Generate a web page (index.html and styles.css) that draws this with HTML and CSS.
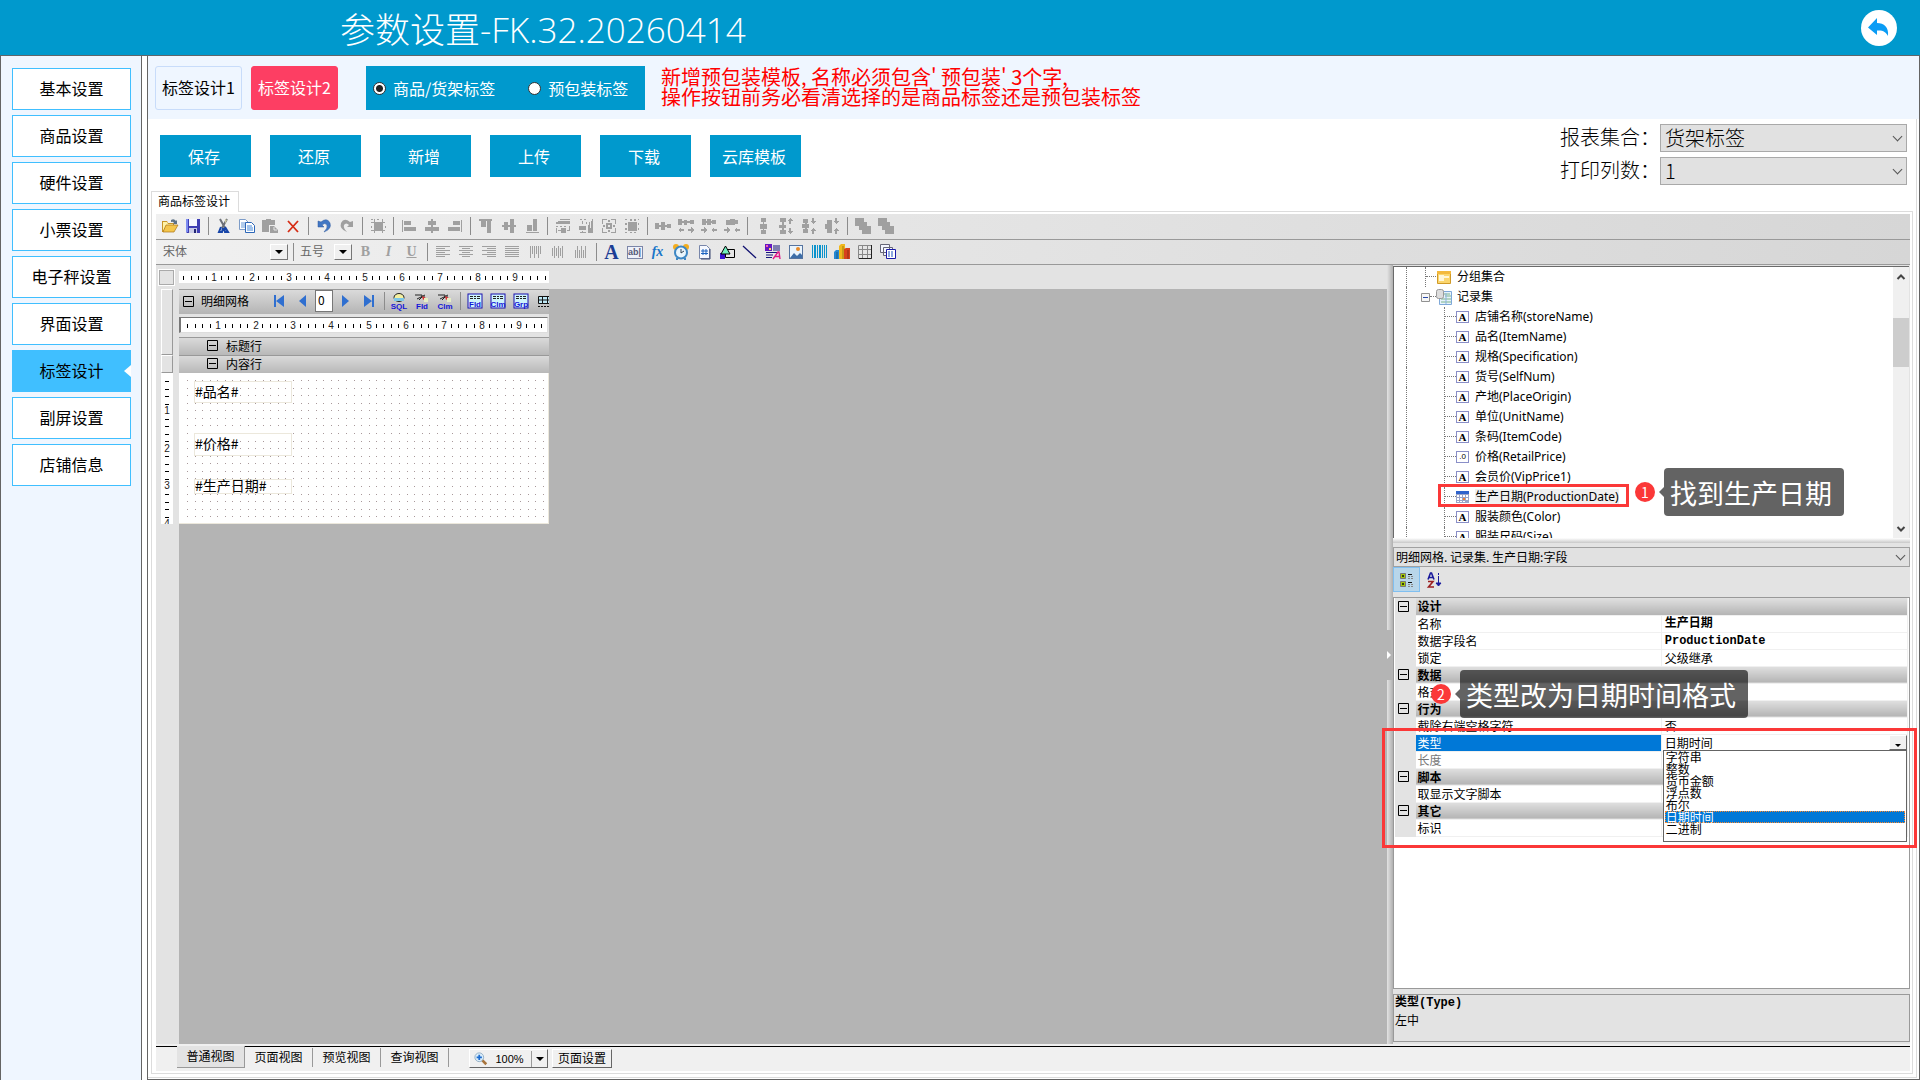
FILE: index.html
```html
<!DOCTYPE html>
<html lang="zh-CN">
<head>
<meta charset="utf-8">
<title>参数设置</title>
<link rel="stylesheet" href="styles.css">
</head>
<body>
<svg class="defs" aria-hidden="true">
  <symbol id="minus" viewBox="0 0 11 11"><path d="M.5.5h10v10h-10zM2 5.500h7" fill="none" stroke="#000"/></symbol>
  <symbol id="pencil" viewBox="0 0 16 16"><path d="M1 2h7v2h3M3 6l8-4M5 7l3-3" stroke="#222" fill="none"/><path d="M8 3l4 2-3 2z" fill="#d33"/><path d="M10 5h4v4h-4z" fill="#e6efc4"/></symbol>
  <symbol id="gridbox" viewBox="0 0 16 16"><rect x="1" y="1" width="14" height="14" fill="#cff3fb" stroke="#1a10b0"/><path d="M3 3h3v1H3zM7 3h2v1H7zM10 3h3v1h-3zM3 5h3v1H3zM7 5h2v1H7zM10 5h3v1h-3z" fill="#222"/></symbol>
</svg>

<header class="header">
  <h1>参数设置-FK.32.20260414</h1>
  <button class="back" aria-label="返回"><svg viewBox="0 0 36 36"><circle cx="18" cy="18" r="18" fill="#fff"/><path d="M7 17.500L16 8v5c7 0 12 4 11 13-2-4-5-6-11-5.500V25z" fill="#0a9cf5"/></svg></button>
</header>

<div class="body">
  <nav class="sidebar">
    <button>基本设置</button>
    <button>商品设置</button>
    <button>硬件设置</button>
    <button>小票设置</button>
    <button>电子秤设置</button>
    <button>界面设置</button>
    <button class="current">标签设计</button>
    <button>副屏设置</button>
    <button>店铺信息</button>
  </nav>

  <main class="main">
    <section class="topbar">
      <button class="mode">标签设计1</button>
      <button class="mode on">标签设计2</button>
      <div class="kinds">
        <label><input type="radio" name="kind" checked>商品/货架标签</label>
        <label><input type="radio" name="kind">预包装标签</label>
      </div>
      <p class="warning">新增预包装模板, 名称必须包含' 预包装' 3个字,<br>操作按钮前务必看清选择的是商品标签还是预包装标签</p>
    </section>

    <div class="outer">
      <section class="actions">
        <div class="buttons">
          <button>保存</button><button>还原</button><button>新增</button><button>上传</button><button>下载</button><button>云库模板</button>
        </div>
        <div class="options">
          <label for="report">报表集合：</label>
          <div class="pick"><select id="report"><option>货架标签</option></select></div>
          <label for="cols">打印列数：</label>
          <div class="pick"><select id="cols"><option>1</option></select></div>
        </div>
      </section>

      <button class="pagetab">商品标签设计</button>
      <section class="page">
        <div class="toolbar">
          <button aria-label="打开"><svg viewBox="0 0 16 16"><path d="M0 3h5l1 2h6v9H0z" fill="#c89528"/><path d="M1 4h4l1 2h5v2H4l-3 5z" fill="#fff3a8"/><path d="M4 7h12l-4 7H1z" fill="#f4c64c" stroke="#a9741a" stroke-width=".7"/><path d="M9 2q3-2 5 1l1-1v4h-4l1-1q-1-2-3-1z" fill="#5d7288"/></svg></button>
          <button aria-label="存盘"><svg viewBox="0 0 16 16"><path d="M1 1h14v14H2l-1-1z" fill="#3e3eb4"/><path d="M4 1h8v7H4z" fill="#f5f7ff"/><path d="M1 1h2v13H1z" fill="#7c8cf0"/><path d="M4 10h8v5H4z" fill="#c9cbe6"/><path d="M9 11h2v4H9z" fill="#222574"/></svg></button>
          <i class="sep"></i>
          <button aria-label="剪切"><svg viewBox="0 0 16 16"><path d="M4 1l5 9M11 1L6 10" stroke="#6c7078" stroke-width="2"/><path d="M9 1l2 1-2 4z" fill="#c8c6a0"/><path d="M5 9l-2 5h3l1-4M9 9l3 5H9l-1-4" fill="none" stroke="#1745a8" stroke-width="2"/></svg></button>
          <button aria-label="复制"><svg viewBox="0 0 16 16"><path d="M.5 1.500h6l3 3v7h-9z" fill="#fff" stroke="#7d9cc8"/><path d="M2 5h5M2 7h4M2 9h4" stroke="#6699d8"/><path d="M6.500 4.500h6l3 3v7h-9z" fill="#fff" stroke="#2d67b8"/><path d="M8 8h5M8 10h6M8 12h6" stroke="#4488d8"/></svg></button>
          <button aria-label="粘贴"><svg viewBox="0 0 16 16" fill="#a0a0a0"><path d="M0 2h4V1h5v1h4v5H7v7H0z"/><path d="M8 8h4l4 4v3H8z"/><path d="M12 9v3h3" stroke="#e8e8e8" fill="none"/></svg></button>
          <button aria-label="删除"><svg viewBox="0 0 16 16"><path d="M3 3l10 11M13 3L3 14" stroke="#d62c14" stroke-width="1.800"/></svg></button>
          <i class="sep"></i>
          <button aria-label="撤消"><svg viewBox="0 0 16 16"><path d="M2 3v6h6L6 7q3-3 5 0 1 3-3 7 8-3 6-9-3-6-9-1z" fill="#4177c4" stroke="#2a569c" stroke-width=".5"/></svg></button>
          <button aria-label="重做"><svg viewBox="0 0 16 16"><path d="M14 3v6H8l2-2q-3-3-5 0-1 3 3 7-8-3-6-9 3-6 9-1z" fill="#a0a0a0"/></svg></button>
          <i class="sep"></i>
          <button aria-label="对齐网格"><svg class="g" viewBox="0 0 16 16"><path d="M5 5h7v7H5zM4 1h1v14H4zM12 1h1v14h-1zM1 4h14v1H1zM1 12h14v1H1zM1 1h2v1H1zM7 1h2v1H7zM1 8h1v2H1zM15 8h1v2h-1z"/></svg></button>
          <i class="sep"></i>
          <button aria-label="左对齐"><svg class="g" viewBox="0 0 16 16"><path d="M1 2h1v12H1zM3 3h7v4H3zM3 9h12v4H3z"/></svg></button>
          <button aria-label="水平居中"><svg class="g" viewBox="0 0 16 16"><path d="M7 1h2v14H7zM4 3h8v4H4zM1 9h14v4H1z"/></svg></button>
          <button aria-label="右对齐"><svg class="g" viewBox="0 0 16 16"><path d="M14 2h1v12h-1zM6 3h7v4H6zM1 9h12v4H1z"/></svg></button>
          <i class="sep"></i>
          <button aria-label="顶对齐"><svg class="g" viewBox="0 0 16 16"><path d="M1 1h13v2H1zM3 3h5v6H3zM9 3h4v12H9z"/></svg></button>
          <button aria-label="垂直居中"><svg class="g" viewBox="0 0 16 16"><path d="M1 7h14v2H1zM3 4h4v8H3zM9 1h4v14H9z"/></svg></button>
          <button aria-label="底对齐"><svg class="g" viewBox="0 0 16 16"><path d="M2 14h13v1H2zM3 7h5v6H3zM9 1h4v12H9z"/></svg></button>
          <i class="sep"></i>
          <button aria-label="等宽"><svg class="g" viewBox="0 0 16 16"><path d="M5 1h10v1H5zM3 3h12v3H1V4h2zM1 8h2v1H1zM5 8h2v1H5zM9 8h2v1H9zM14 8h1v4h-1zM1 10h1v5H1zM3 12h3v1H3zM6 10h5v5H6zM12 12h3v1h-3z"/></svg></button>
          <button aria-label="等高"><svg class="g" viewBox="0 0 16 16"><path d="M14 1h1v14h-5V7h1V4h1v6h1V3h1zM2 1h2v1H2zM6 1h2v1H6zM4 3h1v3H4zM1 8h7v4H1zM4 13h1v2H4zM2 14h6v1H2zM8 4h1v2H8z"/></svg></button>
          <button aria-label="等大小"><svg class="g" viewBox="0 0 16 16"><path d="M1 1h5v1H2v4H1zM10 1h5v5h-1V2h-4zM1 10h1v4h4v1H1zM14 10h1v5h-5v-1h4zM5 5h6v6H5zM7 2h2v2H7zM7 12h2v2H7zM2 7h2v2H2zM12 7h2v2h-2z"/><path d="M7 7h2v2H7z" fill="#e8e8e8"/></svg></button>
          <button aria-label="适应网格"><svg class="g" viewBox="0 0 16 16"><path d="M4 4h9v9H4zM1 1h2v1H1zM6 1h2v2H6zM10 1h2v2h-2zM14 1h1v1h-1zM1 5h2v2H1zM1 10h2v2H1zM14 5h1v2h-1zM14 10h1v2h-1zM1 14h2v1H1zM6 14h2v1H6zM10 14h2v1h-2z"/></svg></button>
          <i class="sep"></i>
          <button aria-label="水平等距"><svg class="g" viewBox="0 0 16 16"><path d="M0 5h4v6H0zM4 7h2v2H4zM6 4h4v8H6zM10 7h2v2h-2zM12 6h4v4h-4z"/></svg></button>
          <button aria-label="增加水平间距"><svg class="g" viewBox="0 0 16 16"><path d="M0 1h4v6H0zM4 3h2v2H4zM6 2h3v5H6zM9 3h3v2H9zM12 2h4v4h-4zM0 12l3-3v2h3v2H3v2zM16 12l-3-3v2h-3v2h3v2z"/></svg></button>
          <button aria-label="减少水平间距"><svg class="g" viewBox="0 0 16 16"><path d="M1 1h4v6H1zM5 3h2v2H5zM6 1h4v6H6zM10 3h2v2h-2zM11 2h4v4h-4zM6 12L3 9v2H0v2h3v2zM10 12l3-3v2h3v2h-3v2z"/></svg></button>
          <button aria-label="移除水平间距"><svg class="g" viewBox="0 0 16 16"><path d="M2 2h5v5H2zM6 1h5v6H6zM11 2h3v4h-3zM6 12L3 9v2H0v2h3v2zM10 12l3-3v2h3v2h-3v2z"/></svg></button>
          <i class="sep"></i>
          <button aria-label="垂直等距"><svg class="g" viewBox="0 0 16 16"><path d="M6 0h5v4H6zM8 4h1v2H8zM5 6h7v5H5zM8 11h1v1H8zM6 12h5v4H6z"/></svg></button>
          <button aria-label="增加垂直间距"><svg class="g" viewBox="0 0 16 16"><path d="M2 0h6v4H2zM4 4h2v3H4zM1 7h7v3H1zM4 10h2v3H4zM2 12h6v4H2zM12 0l3 3h-2v3h-2V3H9zM12 16l3-3h-2v-3h-2v3H9z"/></svg></button>
          <button aria-label="减少垂直间距"><svg class="g" viewBox="0 0 16 16"><path d="M2 1h5v4H2zM1 6h7v4H1zM2 11h5v4H2zM4 4h2v8H4zM12 6l3-3h-2V0h-2v3H9zM12 10l3 3h-2v3h-2v-3H9z"/></svg></button>
          <button aria-label="移除垂直间距"><svg class="g" viewBox="0 0 16 16"><path d="M3 2h5v4H3zM1 6h7v5H1zM3 11h5v4H3zM12 6l3-3h-2V0h-2v3H9zM12 10l3 3h-2v3h-2v-3H9z"/></svg></button>
          <i class="sep"></i>
          <button aria-label="置前"><svg class="g" viewBox="0 0 16 16"><path d="M0 0h9v4h3v4h4v8H7v-4H4V8H0z"/></svg></button>
          <button aria-label="置后"><svg class="g" viewBox="0 0 16 16"><path d="M0 0h9v4h3v4h4v8H7v-4H4V8H0z"/></svg></button>
        </div>

        <div class="toolbar second">
          <div class="combo font"><select aria-label="字体"><option>宋体</option></select><i></i></div>
          <i class="sep"></i>
          <div class="combo size"><select aria-label="字号"><option>五号</option></select><i></i></div>
          <button class="letter b" aria-label="粗体">B</button>
          <button class="letter it" aria-label="斜体">I</button>
          <button class="letter u" aria-label="下划线">U</button>
          <i class="sep"></i>
          <button aria-label="文字左对齐"><svg class="g" viewBox="0 0 16 16"><path d="M1 2h14v1H1zM1 4h9v1H1zM1 6h14v1H1zM1 8h9v1H1zM1 10h14v1H1zM1 12h9v1H1z"/></svg></button>
          <button aria-label="文字居中"><svg class="g" viewBox="0 0 16 16"><path d="M1 2h14v1H1zM4 4h8v1H4zM1 6h14v1H1zM4 8h8v1H4zM1 10h14v1H1zM4 12h8v1H4z"/></svg></button>
          <button aria-label="文字右对齐"><svg class="g" viewBox="0 0 16 16"><path d="M1 2h14v1H1zM6 4h9v1H6zM1 6h14v1H1zM6 8h9v1H6zM1 10h14v1H1zM6 12h9v1H6z"/></svg></button>
          <button aria-label="两端对齐"><svg class="g" viewBox="0 0 16 16"><path d="M1 2h14v1H1zM1 4h14v1H1zM1 6h14v1H1zM1 8h14v1H1zM1 10h14v1H1zM1 12h14v1H1z"/></svg></button>
          <button aria-label="文字靠顶"><svg class="g" viewBox="0 0 16 16"><path d="M3 2h1v12H3zM5 2h1v8H5zM7 2h1v12H7zM9 2h1v8H9zM11 2h1v12h-1zM13 2h1v8h-1z"/></svg></button>
          <button aria-label="文字垂直居中"><svg class="g" viewBox="0 0 16 16"><path d="M2 4h1v8H2zM4 2h1v12H4zM6 4h1v8H6zM8 2h1v12H8zM10 4h1v8h-1zM12 2h1v12h-1z"/></svg></button>
          <button aria-label="文字靠底"><svg class="g" viewBox="0 0 16 16"><path d="M2 6h1v8H2zM4 2h1v12H4zM6 6h1v8H6zM8 2h1v12H8zM10 6h1v8h-1zM12 2h1v12h-1z"/></svg></button>
          <i class="sep"></i>
          <button class="letter text" aria-label="静态框">A</button>
          <button aria-label="综合文字框"><span class="abl">ab|</span></button>
          <button class="letter fx" aria-label="公式">fx</button>
          <button aria-label="系统变量框"><svg viewBox="0 0 16 16"><circle cx="3" cy="3" r="3" fill="#f3ad1e"/><circle cx="13" cy="3" r="3" fill="#f3ad1e"/><circle cx="8" cy="8.500" r="6" fill="#e9f5fc" stroke="#3d87c4" stroke-width="2"/><path d="M8 5v4l3-2" stroke="#345" fill="none"/><path d="M3 14h2v2H3zM11 14h2v2h-2z" fill="#3d87c4"/></svg></button>
          <button aria-label="页码"><svg viewBox="0 0 16 16"><path d="M3.500 1.500h7l3 3v10h-10z" fill="#f5f8ff" stroke="#7886aa"/><path d="M14 5v10H5" stroke="#3b4670" fill="none"/><path d="M7 5v6M10 5v6M5 7h7M5 9.500h7" stroke="#1c63c0"/></svg></button>
          <button aria-label="图形框"><svg viewBox="0 0 16 16"><path d="M6.500 5.500h9v8h-9z" fill="none" stroke="#000"/><path d="M1 9h5v6H1z" fill="#3a14d2"/><path d="M6.500 2L2 10h9z" fill="#72f2c0" stroke="#000"/></svg></button>
          <button aria-label="线段"><svg viewBox="0 0 16 16"><path d="M1 2l13 12" stroke="#101070" stroke-width="1.300"/></svg></button>
          <button aria-label="富文本框"><svg viewBox="0 0 16 16"><path d="M0 0h7v7H0z" fill="#6418c0"/><path d="M1 1h2v2H1z" fill="#ff5cb0"/><path d="M4 4h2v2H4z" fill="#ffe14d"/><path d="M8 2h7M8 4h7M8 6h7M1 8.500h13M1 11h7M1 13.500h6" stroke="#15157a"/><path d="M8 15l5-7h1l1 7M10 12.500h4" fill="none" stroke="#e01888" stroke-width="1.400"/></svg></button>
          <button aria-label="图像框"><svg viewBox="0 0 16 16"><rect x="1.500" y="1.500" width="13" height="13" fill="#eaf4fc" stroke="#5574a0"/><path d="M2 14l4-5 3 3 3-3 2 2v3z" fill="#3d6ea8"/><circle cx="10" cy="5" r="2" fill="#e88a28"/></svg></button>
          <button aria-label="条形码"><svg viewBox="0 0 16 16" fill="#0a93cc"><path d="M1 1h1v13H1zM3 1h2v13H3zM6 1h1v13H6zM8 1h2v13H8zM11 1h1v13h-1zM13 1h1v13h-1zM15 1h1v13h-1z"/></svg></button>
          <button aria-label="图表"><svg viewBox="0 0 16 16"><path d="M0 8l2-2h3v9H0z" fill="#2488d2"/><path d="M5 2l2-2h4v15H5z" fill="#f0b81c"/><path d="M10 5l2-1h4v11h-6z" fill="#d8421c"/><path d="M9 2v13M14 6v9M3 8v7" stroke="#00000055"/></svg></button>
          <button aria-label="自由表格"><svg viewBox="0 0 16 16"><path d="M1.500 1.500h13v13h-13zM5.500 2v12M10.500 2v12M2 5.500h12M2 10.500h12" fill="none" stroke="#888"/><path d="M14.500 1v13.500H2" stroke="#222" fill="none"/></svg></button>
          <button aria-label="子报表"><svg viewBox="0 0 16 16"><path d="M.5.5h9v8h-9zM3.500 3.500h9v8h-9z" fill="#f4f6ff" stroke="#667"/><path d="M6.500 5.500h9v9h-9z" fill="#fff" stroke="#1a1aa8"/><path d="M8 8h6M8 10h6M8 12h6" stroke="#1a50c0" stroke-dasharray="2 1"/></svg></button>
        </div>

        <div class="work">
          <div class="design">
            <div class="rulerrow">
              <span class="corner"></span>
              <svg class="ruler" viewBox="0 0 370 12"><path d="M4 6.500H370"/><g text-anchor="middle"><text x="35" y="10">1</text><text x="73" y="10">2</text><text x="110" y="10">3</text><text x="148" y="10">4</text><text x="186" y="10">5</text><text x="223" y="10">6</text><text x="261" y="10">7</text><text x="299" y="10">8</text><text x="336" y="10">9</text></g></svg>
            </div>
            <div class="stage">
              <div class="gutter">
                <span class="bevel tall"></span><span class="bevel"></span>
                <svg class="ruler" viewBox="0 0 12 151"><path d="M6 8V151"/><g text-anchor="middle"><text x="6" y="41">1</text><text x="6" y="79">2</text><text x="6" y="116">3</text><text x="6" y="154">4</text></g></svg>
              </div>
              <div class="report">
                <div class="gridhead">
                  <svg class="box"><use href="#minus"/></svg><span>明细网格</span>
                  <button aria-label="首条"><svg viewBox="0 0 16 16"><path d="M3 2h2v12H3zM13 2v12L5 8z" fill="#2f6fd0"/></svg></button>
                  <button aria-label="上一条"><svg viewBox="0 0 16 16"><path d="M12 2v12L5 8z" fill="#2f6fd0"/></svg></button>
                  <input aria-label="记录号" value="0">
                  <button aria-label="下一条"><svg viewBox="0 0 16 16"><path d="M4 2v12l7-6z" fill="#2f6fd0"/></svg></button>
                  <button aria-label="末条"><svg viewBox="0 0 16 16"><path d="M11 2h2v12h-2zM3 2v12l8-6z" fill="#2f6fd0"/></svg></button>
                  <i class="sep"></i>
                  <button aria-label="查询SQL"><svg viewBox="0 0 16 16"><ellipse cx="8" cy="4.500" rx="5" ry="4" fill="#f4f0a0" stroke="#222"/><path d="M3 5h10v3H3z" fill="#7cc7e8"/><text x="8" y="16" text-anchor="middle" class="tag">SQL</text></svg></button>
                  <button aria-label="字段"><svg viewBox="0 0 16 16"><use href="#pencil"/><text x="8" y="16" text-anchor="middle" class="tag">Fld</text></svg></button>
                  <button aria-label="列"><svg viewBox="0 0 16 16"><use href="#pencil"/><text x="8" y="16" text-anchor="middle" class="tag">Clm</text></svg></button>
                  <i class="sep"></i>
                  <button aria-label="字段表"><svg viewBox="0 0 16 16"><use href="#gridbox"/><text x="8" y="14" text-anchor="middle" class="tag">Fld</text></svg></button>
                  <button aria-label="列表"><svg viewBox="0 0 16 16"><use href="#gridbox"/><text x="8" y="14" text-anchor="middle" class="tag">Clm</text></svg></button>
                  <button aria-label="分组表"><svg viewBox="0 0 16 16"><use href="#gridbox"/><text x="8" y="14" text-anchor="middle" class="tag">Grp</text></svg></button>
                  <button aria-label="表格"><svg viewBox="0 0 16 16"><path d="M2.500 3.500h14v7h-14z" fill="#bfe9f6" stroke="#111"/><path d="M2 7h14M6.500 3v7M11.500 3v7" stroke="#111"/><path d="M2 13.500h14" stroke="#111" stroke-dasharray="2 1"/></svg></button>
                </div>
                <div class="subruler">
                  <svg class="ruler" viewBox="0 0 366 12"><path d="M6 6.500H366"/><g text-anchor="middle"><text x="37" y="10">1</text><text x="75" y="10">2</text><text x="112" y="10">3</text><text x="150" y="10">4</text><text x="188" y="10">5</text><text x="225" y="10">6</text><text x="263" y="10">7</text><text x="301" y="10">8</text><text x="338" y="10">9</text></g></svg>
                </div>
                <div class="rowhead"><svg class="box"><use href="#minus"/></svg>标题行</div>
                <div class="rowhead"><svg class="box"><use href="#minus"/></svg>内容行</div>
                <div class="canvas">
                  <svg class="dots"><defs><pattern id="dots" width="53" height="53" x="8" y="7" patternUnits="userSpaceOnUse"><path d="M0 .5h53M0 8.500h53M0 15.500h53M0 23.500h53M0 30.500h53M0 38.500h53M0 45.500h53" stroke="#a8989a" stroke-dasharray="1 7 1 6 1 7 1 6 1 7 1 6 1 7"/></pattern></defs><rect x="8" y="7" width="360" height="142" fill="url(#dots)"/></svg>
                  <div class="field f1">#品名#</div>
                  <div class="field f2">#价格#</div>
                  <div class="field f3">#生产日期#</div>
                </div>
              </div>
            </div>
          </div>
          <div class="splitter"><span></span></div>

          <aside class="panel">
            <div class="treebox">
              <div class="tree">
                <div class="node"><i class="g1"></i><i class="g2"></i><i class="h10"></i><svg class="i16" viewBox="0 0 16 16"><path d="M1.500 3.500h13v11h-13z" fill="#fbd66e" stroke="#d09a28"/><path d="M1 2h14v3H1z" fill="#f3b93c"/><path d="M3 6h5v1h5v2H8v3H3z" fill="#fff6d8"/></svg><span>分组集合</span></div>
                <div class="node"><i class="g1"></i><svg class="toggle" viewBox="0 0 9 9"><path d="M.5.5h8v8h-8z" fill="#f6f6f6" stroke="#919191"/><path d="M2 4.500h5" stroke="#2a4aa8"/></svg><i class="h6"></i><svg class="i16 rs" viewBox="0 0 16 16"><path d="M3.500 2.500h12v13h-12z" fill="#e6f2fc" stroke="#7ea8d8"/><path d="M8 5h6M5 10h10M5 13h10M9 7h6" stroke="#7fb58a"/><path d="M10 4v11" stroke="#8bb4e0"/><rect x=".5" y=".5" width="7" height="9" rx="2" fill="#ddd" stroke="#999"/></svg><span>记录集</span></div>
                <div class="node leaf"><i class="g1"></i><i class="g3"></i><i class="h11"></i><b class="type">A</b><span>店铺名称(storeName)</span></div>
                <div class="node leaf"><i class="g1"></i><i class="g3"></i><i class="h11"></i><b class="type">A</b><span>品名(ItemName)</span></div>
                <div class="node leaf"><i class="g1"></i><i class="g3"></i><i class="h11"></i><b class="type">A</b><span>规格(Specification)</span></div>
                <div class="node leaf"><i class="g1"></i><i class="g3"></i><i class="h11"></i><b class="type">A</b><span>货号(SelfNum)</span></div>
                <div class="node leaf"><i class="g1"></i><i class="g3"></i><i class="h11"></i><b class="type">A</b><span>产地(PlaceOrigin)</span></div>
                <div class="node leaf"><i class="g1"></i><i class="g3"></i><i class="h11"></i><b class="type">A</b><span>单位(UnitName)</span></div>
                <div class="node leaf"><i class="g1"></i><i class="g3"></i><i class="h11"></i><b class="type">A</b><span>条码(ItemCode)</span></div>
                <div class="node leaf"><i class="g1"></i><i class="g3"></i><i class="h11"></i><b class="type num">.0</b><span>价格(RetailPrice)</span></div>
                <div class="node leaf"><i class="g1"></i><i class="g3"></i><i class="h11"></i><b class="type">A</b><span>会员价(VipPrice1)</span></div>
                <div class="node leaf picked"><i class="g1"></i><i class="g3"></i><i class="h11"></i><svg class="i14" viewBox="0 0 14 14"><path d="M0 1h13v12H0z" fill="#9aa4c8"/><path d="M0 1h13v3H0z" fill="#2f63cc"/><path d="M1 5h2v2H1zM4 5h2v2H4zM7 5h2v2H7zM10 5h2v2h-2zM1 8h2v2H1zM4 8h2v2H4zM10 8h2v2h-2zM1 11h2v1H1zM4 11h2v1H4zM7 11h2v1H7z" fill="#fff"/><path d="M7 8h2v2H7z" fill="#f08030"/></svg><span>生产日期(ProductionDate)</span>
                  <div class="mark"></div><div class="note"><b>1</b><p>找到生产日期</p></div>
                </div>
                <div class="node leaf"><i class="g1"></i><i class="g3"></i><i class="h11"></i><b class="type">A</b><span>服装颜色(Color)</span></div>
                <div class="node leaf"><i class="g1"></i><i class="g3"></i><i class="h11"></i><b class="type">A</b><span>服装尺码(Size)</span></div>
              </div>
              <div class="scroll"><svg viewBox="0 0 16 20"><path d="M4.500 12L8 8.500l3.500 3.500" /></svg><span></span><svg viewBox="0 0 16 20"><path d="M4.500 9L8 12.500 11.500 9"/></svg></div>
            </div>
            <div class="hsplit"></div>
            <div class="pick small"><select aria-label="对象"><option>明细网格. 记录集. 生产日期:字段</option></select></div>
            <div class="proptools">
              <button class="on" aria-label="按分类排序"><svg viewBox="0 0 16 16"><path d="M1.500 1.500h5v5h-5zM1.500 9.500h5v5h-5z" fill="#a4c808" stroke="#777"/><path d="M3 4h2M4 3v2M3 12h2M4 11v2M9 2.500h4M9 10.500h4" stroke="#111"/><path d="M9 4.500h6M9 6.500h6M9 12.500h6M9 14.500h6" stroke="#888" stroke-dasharray="2 1"/></svg></button>
              <button aria-label="按字母排序"><svg viewBox="0 0 16 16"><path d="M2 7.500L4.500 1h1L8 7.500M3 5.500h4" fill="none" stroke="#1a1a9c" stroke-width="1.600"/><path d="M2 9.500h5L2.500 15H8" fill="none" stroke="#9c2020" stroke-width="1.600"/><path d="M12.500 1v2M12.500 4v8M10 11h5l-2.500 3z" stroke="#1a1a9c" fill="#1a1a9c"/></svg></button>
            </div>
            <div class="props">
              <table>
                <colgroup><col class="c0"><col><col></colgroup>
                <tr class="cat"><td><svg class="box"><use href="#minus"/></svg></td><th colspan="2">设计</th></tr>
                <tr><td></td><td>名称</td><td><b>生产日期</b></td></tr>
                <tr><td></td><td>数据字段名</td><td><b>ProductionDate</b></td></tr>
                <tr><td></td><td>锁定</td><td>父级继承</td></tr>
                <tr class="cat"><td><svg class="box"><use href="#minus"/></svg></td><th colspan="2">数据</th></tr>
                <tr><td></td><td>格式</td><td></td></tr>
                <tr class="cat"><td><svg class="box"><use href="#minus"/></svg></td><th colspan="2">行为</th></tr>
                <tr><td></td><td>截除右端空格字符</td><td>否</td></tr>
                <tr><td></td><td class="sel">类型</td><td><div class="value">日期时间<button aria-label="展开"></button>
                  <select class="list" size="7" aria-label="类型"><option>字符串</option><option>整数</option><option>货币金额</option><option>浮点数</option><option>布尔</option><option selected>日期时间</option><option>二进制</option></select></div></td></tr>
                <tr><td></td><td class="dim">长度</td><td></td></tr>
                <tr class="cat"><td><svg class="box"><use href="#minus"/></svg></td><th colspan="2">脚本</th></tr>
                <tr><td></td><td>取显示文字脚本</td><td></td></tr>
                <tr class="cat"><td><svg class="box"><use href="#minus"/></svg></td><th colspan="2">其它</th></tr>
                <tr><td></td><td>标识</td><td></td></tr>
              </table>
              <div class="mark"></div>
              <div class="note"><b>2</b><p>类型改为日期时间格式</p></div>
            </div>
            <div class="desc"><b>类型(Type)</b><span>左中</span></div>
          </aside>
        </div>

        <footer class="viewbar">
          <button class="view on">普通视图</button>
          <button class="view">页面视图</button>
          <button class="view">预览视图</button>
          <button class="view">查询视图</button>
          <button class="zoom"><svg viewBox="0 0 16 16"><path d="M9 9l5 5" stroke="#a8743c" stroke-width="3"/><circle cx="6" cy="6" r="5" fill="#dceefa" stroke="#8aa8c0"/><path d="M3 6h6M6 3v6" stroke="#1c6cd0" stroke-width="2"/></svg><span>100%</span><i></i></button>
          <button class="setup">页面设置</button>
        </footer>
      </section>
    </div>
  </main>
</div>
</body>
</html>
```

FILE: styles.css
```css
* { box-sizing: border-box; }

body {
  margin: 0;
  min-height: 100vh;
  display: flex;
  flex-direction: column;
  background: #fff;
  color: #000;
  font: 12px/16px "Noto Sans CJK SC", sans-serif;
}

button, select, input { font: inherit; color: inherit; border-radius: 0; }
button { margin: 0; padding: 0; border: 0; background: none; }
p, h1 { margin: 0; }
svg { display: block; flex: none; }
.defs { position: absolute; width: 0; height: 0; }

/* title bar */
.header {
  display: flex;
  align-items: center;
  justify-content: space-between;
  height: 56px;
  padding: 0 23px 0 340px;
  border-bottom: 1px solid #5f666b;
  background: #0099cd;
  color: #fff;
}
.header h1 {
  padding-top: 4px;
  font: 300 35px/48px "Open Sans", "Noto Sans CJK SC", sans-serif;
}
.back svg { width: 36px; height: 36px; }

.body { flex: 1; display: flex; gap: 5px; }

/* left navigation */
.sidebar {
  flex: none;
  width: 142px;
  display: flex;
  flex-direction: column;
  gap: 5px;
  padding: 12px 10px 12px 11px;
  border: solid #646464;
  border-width: 0 1px;
  background: #eff6ff;
}
.sidebar button {
  height: 42px;
  padding-bottom: 2px;
  border: 1px solid #40bfff;
  background: #fff;
  font-size: 16px;
}
.sidebar .current {
  position: relative;
  background: #40bfff;
}
.sidebar .current::after {
  content: "";
  position: absolute;
  right: -1px;
  top: 14px;
  border: solid transparent;
  border-width: 6px 7px 6px 0;
  border-right-color: #fff;
}

.main {
  flex: 1;
  min-width: 0;
  display: flex;
  flex-direction: column;
  border: 1px solid #646464;
  border-top: 0;
}

.topbar {
  display: flex;
  padding: 10px 7px 9px;
  background: #eff6ff;
  font-size: 16px;
}
.mode {
  width: 87px;
  height: 44px;
  margin-right: 9px;
  padding-bottom: 2px;
  border: 1px solid #c8dcfa;
  border-radius: 3px;
}
.mode.on { border-color: #fd3e63; background: #fd3e63; color: #fff; }
.kinds {
  display: flex;
  align-items: center;
  gap: 33px;
  width: 279px;
  height: 44px;
  margin: 0 16px 0 19px;
  padding-left: 7px;
  background: #0099cd;
  color: #fff;
}
.kinds label { display: flex; align-items: center; gap: 7px; white-space: nowrap; }
.kinds input {
  appearance: none;
  width: 13px;
  height: 13px;
  margin: 0;
  border: 1px solid #333;
  border-radius: 50%;
  background: #fff;
}
.kinds input:checked { background: radial-gradient(#222 0 3px, #fff 4px); }
.warning { padding-top: 1px; color: #f00; font-size: 20px; line-height: 20px; white-space: nowrap; }

.outer {
  flex: 1;
  display: flex;
  flex-direction: column;
  margin: 0 2px 1px 0;
  border: solid #dcdcdc;
  border-width: 0 1px 1px 0;
}

/* action buttons and report choices */
.actions {
  display: flex;
  justify-content: space-between;
  padding: 5px 9px 6px 12px;
}
.buttons { display: flex; gap: 19px; padding-top: 11px; }
.buttons button {
  width: 91px;
  height: 42px;
  padding: 0 3px 1px 0;
  background: #0099cd;
  color: #fff;
  font-size: 16px;
}
.options {
  display: grid;
  grid-template-columns: 100px 247px;
  row-gap: 5px;
  font-size: 20px;
  font-weight: 300;
  line-height: 26px;
  white-space: nowrap;
}
.pick { position: relative; }
.pick select {
  display: block;
  appearance: none;
  width: 100%;
  height: 28px;
  padding: 0 4px;
  border: 1px solid #a9a9a9;
  background: #e1e1e1;
}
.pick::after {
  content: "";
  position: absolute;
  right: 6px;
  top: 9px;
  width: 6px;
  height: 6px;
  border: solid #555;
  border-width: 0 1px 1px 0;
  transform: rotate(45deg);
}
.pick.small select { height: 20px; padding: 0 2px; line-height: 16px; border-color: #a0a0a0; }
.pick.small::after { top: 5px; }

.pagetab {
  position: relative;
  align-self: flex-start;
  height: 21px;
  width: 88px;
  margin: 0 0 -1px 3px;
  padding: 0 2px 2px 0;
  border: 1px solid #dcdcdc;
  border-bottom: 0;
  background: #fff;
}
.page {
  flex: 1;
  display: flex;
  flex-direction: column;
  margin: 0 3px 3px;
  padding: 2px 2px 2px 4px;
  border: 1px solid #dcdcdc;
}

/* toolbars */
.toolbar {
  display: flex;
  align-items: center;
  height: 26px;
  padding: 0 2px 1px;
  border-bottom: 1px solid #999;
  background: linear-gradient(90deg, #f0f0f0, #d6d6d6);
}
.toolbar.second { height: 25px; padding: 0; }
.toolbar button, .gridhead button {
  display: flex;
  flex: none;
  align-items: center;
  justify-content: center;
  width: 23px;
  height: 22px;
}
.toolbar svg, .gridhead button svg { width: 16px; height: 16px; overflow: visible; }
.g { fill: #a0a0a0; shape-rendering: crispEdges; }
.sep {
  flex: none;
  width: 8px;
  height: 18px;
  background: linear-gradient(#8c8c8c, #8c8c8c) 4px 0 / 1px 100% no-repeat;
}
.combo { display: flex; align-items: center; color: #666; }
.combo select {
  appearance: none;
  height: 18px;
  padding: 0 0 2px;
  border: 0;
  background: none;
  line-height: 16px;
}
.combo.font { width: 132px; margin-right: 1px; }
.combo.font select { width: 114px; padding-left: 7px; }
.combo.size { width: 55px; margin-right: 2px; }
.combo.size select { width: 37px; padding-left: 3px; }
.combo i, .zoom i {
  width: 18px;
  height: 16px;
  border: 1px solid;
  border-color: #fff #777 #777 #fff;
  background: #f0f0f0;
  display: flex;
  align-items: center;
  justify-content: center;
}
.combo i::after, .zoom i::after {
  content: "";
  border: 4px solid transparent;
  border-top-color: #000;
  border-bottom: 0;
}
.toolbar .letter { color: #a0a0a0; font: bold 14px/16px "Liberation Serif", serif; }
.toolbar .it { font-style: italic; }
.toolbar .u { text-decoration: underline; }
.toolbar .text { color: #1c3d94; font-size: 20px; line-height: 22px; }
.toolbar .fx { color: #1976c8; font-style: italic; }
.abl {
  width: 16px;
  height: 13px;
  border: 1px solid #7c86a8;
  background: #eef1fa;
  color: #555a78;
  font: bold 9px/11px "Liberation Sans", sans-serif;
}

.work { flex: 1; display: flex; background: #e3e3e3; }
.design { flex: 1; min-width: 0; display: flex; flex-direction: column; }
.rulerrow { display: flex; align-items: center; gap: 5px; height: 24px; padding-left: 3px; }
.corner { width: 15px; height: 15px; border: 1px solid #aaa; outline: 1px solid #fff; }
.ruler { background: #fff; height: 12px; width: 370px; }
.ruler path {
  fill: none;
  stroke: #000;
  stroke-width: 4;
  stroke-dasharray: 1 6.54 1 6.54 1 6.54 1 14.08;
  shape-rendering: crispEdges;
}
.ruler text { font: 10px "Liberation Sans", sans-serif; fill: #222; }
.stage { flex: 1; display: flex; background: #b4b4b4; }
.gutter { width: 23px; padding-left: 5px; background: #e3e3e3; }
.gutter .ruler { width: 12px; height: 151px; }
.bevel {
  display: block;
  width: 12px;
  height: 18px;
  border: 1px solid;
  border-color: #fff #999 #999 #fff;
}
.bevel.tall { height: 66px; }
.report { width: 370px; }
.gridhead {
  display: flex;
  align-items: center;
  height: 25px;
  padding: 0 0 2px 4px;
  overflow: hidden;
  border-top: 1px solid #999;
  background: linear-gradient(#dadada, #b4b4b4);
}
.gridhead span { flex: none; width: 73px; padding-left: 7px; }
.gridhead .sep { width: 7px; }
.gridhead input {
  flex: none;
  width: 18px;
  height: 22px;
  margin: 0 1px 0 2px;
  padding: 0 0 4px 2px;
  border: 1px solid #777;
  background: #fff;
}
.box { width: 11px; height: 11px; }
.tag { font: bold 8px "Liberation Sans", sans-serif; fill: #1414d8; }
.subruler { height: 23px; padding: 3px 1px 0 0; background: #e3e3e3; }
.subruler .ruler {
  width: 369px;
  height: 16px;
  padding: 1px 0;
  border: 1px solid #ddd;
  border-top-color: #777;
  border-left: 2px solid #777;
}
.rowhead {
  display: flex;
  align-items: center;
  gap: 8px;
  height: 18px;
  padding: 0 0 2px 28px;
  border-top: 1px solid #999;
  background: linear-gradient(#dadada, #b8b8b8);
}
.canvas {
  position: relative;
  height: 151px;
  border: solid #ece8dc;
  border-width: 0 1px 1px 0;
  background: #fff;
}
.dots { width: 100%; height: 100%; shape-rendering: crispEdges; }
.field {
  position: absolute;
  left: 15px;
  width: 98px;
  display: flex;
  align-items: center;
  padding-bottom: 3px;
  border: 1px solid #ece8dc;
  font-size: 14px;
}
.f1 { top: 8px; height: 22px; }
.f2 { top: 60px; height: 23px; }
.f3 { top: 106px; height: 15px; }

.splitter {
  flex: none;
  display: flex;
  align-items: center;
  width: 6px;
  background: linear-gradient(90deg, #e3e3e3, #b0b0b0);
}
.splitter span { width: 5px; height: 50px; background: #b4b4b4; display: flex; align-items: center; }
.splitter span::after {
  content: "";
  border: 4px solid transparent;
  border-left-color: #fff;
  border-right: 0;
}

/* right panel */
.panel {
  flex: none;
  width: 517px;
  display: flex;
  flex-direction: column;
  padding: 1px 0 2px;
}
.treebox {
  display: flex;
  height: 272px;
  margin-right: 1px;
  border: solid #6a6a6a;
  border-width: 1px 0 0 1px;
  background: #fff;
}
.tree { flex: 1; overflow: hidden; font-family: "Noto Sans", "Noto Sans CJK SC", sans-serif; }
.node { position: relative; display: flex; align-items: center; height: 20px; white-space: nowrap; }
.node i { flex: none; align-self: stretch; }
.g1 { width: 13px; border-right: 1px dotted #777; }
.g2 { width: 19px; border-right: 1px dotted #777; }
.g3 { width: 38px; border-right: 1px dotted #777; }
.h6, .h10, .h11 { border-bottom: 1px dotted #777; height: 10px; }
.node .h6, .node .h10, .node .h11 { align-self: flex-start; }
.h6 { width: 6px; }
.h10 { width: 10px; }
.h11 { width: 11px; }
.toggle { width: 9px; height: 9px; margin-left: 14px; }
.i16 { width: 16px; height: 16px; margin-right: 5px; }
.i14 { width: 14px; height: 14px; margin-right: 5px; }
.type {
  width: 13px;
  height: 12px;
  margin-right: 6px;
  border: 1px solid #8a8fc8;
  font: bold 11px/10px "Liberation Serif", serif;
  text-align: center;
}
.type.num { font: 8px/10px "Liberation Sans", sans-serif; }
.picked span { background: #f0f0f0; }
.scroll {
  width: 16px;
  display: flex;
  flex-direction: column;
  justify-content: space-between;
  background: #f0f0f0;
}
.scroll svg { width: 16px; height: 20px; fill: none; stroke: #444; stroke-width: 2; }
.scroll span { height: 49px; margin-bottom: 120px; background: #cdcdcd; }
.hsplit {
  height: 9px;
  border-bottom: 4px solid #e3e3e3;
  background: linear-gradient(#fff, #c8c8c8);
}
.proptools { display: flex; height: 30px; }
.proptools button { width: 27px; height: 25px; padding: 4px 5px; border: 1px solid transparent; }
.proptools .on { border-color: #80bff0; background: #b8d6ea; }
.proptools svg { width: 16px; height: 16px; }

.props {
  position: relative;
  flex: 1;
  padding: 0 1px;
  border: 1px solid #999;
  background: #fff;
}
table { width: 100%; table-layout: fixed; border-collapse: collapse; }
.c0 { width: 20px; }
td, th {
  height: 17px;
  padding: 0 0 0 2px;
  border: solid #f0f0f0;
  border-width: 0 1px 1px 0;
  line-height: 16px;
  text-align: left;
  white-space: nowrap;
}
td:first-child { padding: 0 0 0 3px; border-color: #e3e3e3; background: #e3e3e3; }
td:nth-child(3) { padding-left: 3px; }
.cat th { background: linear-gradient(#e0e0e0, #b4b4b4); }
td b, .desc b { display: block; font-family: "Liberation Mono", "Noto Sans CJK SC", monospace; }
.sel { background: #0078d7; color: #fff; }
.dim { color: #777; }
.value { position: relative; display: flex; justify-content: space-between; height: 16px; }
.value button {
  width: 18px;
  height: 15px;
  border: 1px solid;
  border-color: #fff #666 #666 #fff;
  background: #f0f0f0;
}
.value button::after {
  content: "";
  display: inline-block;
  border: 3px solid transparent;
  border-top-color: #000;
  border-bottom: 0;
  vertical-align: 2px;
}
.list {
  position: absolute;
  left: -2px;
  right: 0;
  top: 15px;
  height: 92px;
  margin: 0;
  padding: 0 1px;
  border: 1px solid #646464;
  background: #fff;
  overflow: hidden;
  appearance: none;
  scrollbar-width: none;
}
.list option {
  display: flex;
  align-items: center;
  height: 12px;
  min-height: 0;
  padding: 0 1px;
  line-height: 12px;
  color: #000;
}
.list option:checked {
  background: linear-gradient(#0078d7, #0078d7);
  color: #fff;
  outline: 1px dotted #ff8728;
  outline-offset: -1px;
}

/* guide marks */
.mark { position: absolute; border: 3px solid #fb3838; }
.node .mark { left: 44px; top: -3px; width: 191px; height: 23px; }
.props .mark { left: -12px; right: -8px; top: 130px; height: 120px; }
.note { position: absolute; display: flex; align-items: center; }
.node .note { left: 241px; top: -19px; z-index: 1; }
.props .note { left: 37px; top: 72px; }
.note b {
  width: 20px;
  height: 20px;
  margin-right: 9px;
  border-radius: 50%;
  background: #fb3838;
  color: #fff;
  font: 14px/20px "Noto Sans CJK SC", sans-serif;
  text-align: center;
}
.note p {
  position: relative;
  height: 48px;
  padding: 0 12px 0 6px;
  border-radius: 4px;
  background: rgba(0, 0, 0, .61);
  color: #fff;
  font: 27px/50px "Noto Sans CJK SC", sans-serif;
}
.note p::before {
  content: "";
  position: absolute;
  right: 100%;
  top: 19px;
  border: solid transparent;
  border-width: 5px 5px 5px 0;
  border-right-color: rgba(0, 0, 0, .61);
}

.desc {
  display: flex;
  flex-direction: column;
  gap: 1px;
  height: 48px;
  margin-top: 5px;
  padding-left: 1px;
  border: 1px solid #999;
}

/* bottom bar */
.viewbar {
  display: flex;
  align-items: flex-start;
  height: 27px;
  padding-left: 21px;
  background: linear-gradient(#000, #000) 0 2px / 100% 1px no-repeat, #f0f0f0;
}
.view { width: 68px; height: 19px; margin-top: 4px; padding-bottom: 1px; border-right: 1px solid #999; }
.view.on {
  height: 22px;
  margin-top: 2px;
  border-bottom: 1px solid #999;
  background: #e3e3e3;
}
.zoom {
  display: flex;
  align-items: center;
  width: 79px;
  height: 19px;
  margin: 5px 4px 0 20px;
  border: 1px solid;
  border-color: #fff #666 #666 #fff;
}
.zoom svg { width: 14px; height: 14px; margin-left: 4px; }
.zoom span { flex: 1; text-align: center; font: 11px/16px "Liberation Sans", sans-serif; }
.zoom i { border-width: 0 0 0 1px; border-color: #999; width: 16px; }
.setup {
  width: 60px;
  height: 19px;
  margin-top: 5px;
  padding-bottom: 1px;
  border: 1px solid;
  border-color: #fff #666 #666 #fff;
}
```
